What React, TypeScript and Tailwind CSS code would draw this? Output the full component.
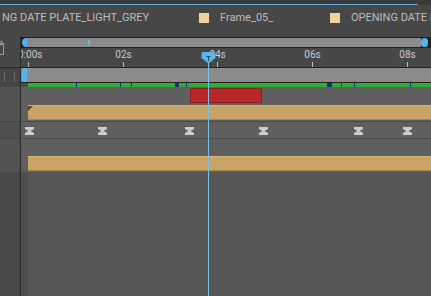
import React from "react";

const TICKS = [
  { x: 7, label: "0:00s" },
  { x: 102, label: "02s" },
  { x: 196, label: "04s" },
  { x: 291, label: "06s" },
  { x: 386, label: "08s" },
];

const MARKS = [
  { x: 48, w: 1 },
  { x: 92, w: 1 },
  { x: 103, w: 1 },
  { x: 147, w: 4 },
  { x: 158, w: 1 },
  { x: 299, w: 5 },
  { x: 313, w: 1 },
  { x: 326, w: 1 },
  { x: 382, w: 1 },
];

const KEYS = [29, 102, 189, 263, 358, 407];

function KeyIcon({ x }: { x: number }) {
  return (
    <svg
      className="absolute top-[5px]"
      style={{ left: x - 21 - 4.5 }}
      width="9"
      height="8"
      viewBox="0 0 9 8"
    >
      <polygon points="0,0 9,0 9,2 5.5,4 9,6 9,8 0,8 0,6 3.5,4 0,2" fill="#cdcdcd" />
    </svg>
  );
}

function TanBar({ corner }: { corner?: boolean }) {
  return (
    <div className="relative ml-[7px] h-[15px] bg-[#c9a265] border-t border-t-[#d9b577] border-b border-b-[#a8864f]">
      {corner && (
        <svg className="absolute left-0 top-0" width="5" height="5" viewBox="0 0 5 5">
          <polygon points="0,0 5,0 0,5" fill="#5b4024" />
        </svg>
      )}
    </div>
  );
}

export default function App() {
  return (
    <div className="relative w-[431px] h-[296px] overflow-hidden bg-[#575757] flex flex-col font-['Roboto',sans-serif]">
      {/* top strip */}
      <div className="h-[4px] bg-[#3a3a3a]" />
      <div className="h-px bg-[#3a3a3a]">
        <div className="w-[418px] h-px bg-[#5eb0dc]" />
      </div>

      {/* header with layer labels */}
      <div className="h-[32px] bg-[#474747] flex items-start pt-[8px] text-[11px] leading-[10px] text-[#bdbdbd] whitespace-nowrap overflow-hidden">
        <div className="w-[197px] ml-[2px] h-[10px] flex items-center shrink-0">NG DATE PLATE_LIGHT_GREY</div>
        <div className="w-[10px] h-[10px] bg-[#f0d29c] shrink-0" />
        <div className="w-[110px] ml-[11px] h-[10px] flex items-center shrink-0">Frame_05_</div>
        <div className="w-[10px] h-[10px] bg-[#f0d29c] shrink-0" />
        <div className="ml-[11px] h-[10px] flex items-center shrink-0">OPENING DATE PLATE</div>
      </div>

      {/* body */}
      <div className="flex flex-1 min-h-0">
        {/* left column */}
        <div className="w-[20px] flex flex-col shrink-0">
          <div className="h-[30px] bg-[#474747] relative">
            <svg className="absolute left-[-4px] top-[4px]" width="9" height="14" viewBox="0 0 9 14">
              <rect x="0.5" y="2.5" width="7" height="11" fill="none" stroke="#9a9a9a" strokeWidth="1" />
              <rect x="2" y="0.5" width="4" height="3" fill="none" stroke="#9a9a9a" strokeWidth="1" />
            </svg>
          </div>
          <div className="h-px bg-[#2c2c2c]" />
          <div className="h-[19px] bg-[#454545] relative">
            <div className="absolute left-[4px] top-[4px] w-px h-[10px] bg-[#6b6b6b]" />
            <div className="absolute left-[14px] top-[4px] w-px h-[10px] bg-[#6b6b6b]" />
          </div>
          <div className="h-[17px] bg-[#535353]" />
          <div className="h-[17px] bg-[#535353]" />
          <div className="h-px bg-[#444444]" />
          <div className="h-[16px] bg-[#4f4f4f]" />
          <div className="h-px bg-[#444444]" />
          <div className="h-[16px] bg-[#535353]" />
          <div className="h-[17px] bg-[#535353]" />
          <div className="flex-1 bg-[#484848]" />
        </div>
        <div className="w-px bg-[#2a2a2a] shrink-0" />

        {/* right timeline area */}
        <div className="flex-1 flex flex-col min-w-0 overflow-hidden">
          {/* scroll bar */}
          <div className="h-[11px] bg-[#1f1f1f] py-px flex">
            <div className="w-[5px] ml-px h-[9px] rounded-l-full bg-[#52b6ee] shrink-0" />
            <div className="w-[394px] h-[9px] bg-[#8b8b8b] relative shrink-0">
              <div className="absolute left-[61px] top-[2px] w-[2px] h-[5px] bg-[#6fb6d8]" />
            </div>
            <div className="w-[7px] h-[9px] rounded-full bg-[#52b6ee] shrink-0" />
          </div>

          {/* ruler */}
          <div className="h-[19px] bg-[#474747] relative">
            {TICKS.map((t, i) => (
              <React.Fragment key={t.label}>
                <div
                  className={
                    "absolute top-[2px] text-[10px] leading-[10px] text-[#cacaca] whitespace-nowrap " +
                    (i === 0 ? "" : "-translate-x-1/2")
                  }
                  style={{ left: i === 0 ? -3 : t.x + 0.5 }}
                >
                  {t.label}
                </div>
                <div className="absolute top-[14px] w-px h-[5px] bg-[#bdbdbd]" style={{ left: t.x }} />
              </React.Fragment>
            ))}
          </div>
          <div className="h-px bg-[#1f1f1f]" />

          {/* work area bar */}
          <div className="h-[14px] flex bg-[#8b8b8b]">
            <div className="w-[5px] ml-px h-[14px] rounded-l-[3px] bg-[#52b6ee]" />
          </div>
          <div className="h-px bg-[#1f1f1f]" />
          <div className="h-[4px] bg-[#4a4a4a] pl-[7px]">
            <div className="h-[4px] bg-[#2fae35] relative">
              {MARKS.map((m) => (
                <div
                  key={m.x}
                  className="absolute top-0 h-[4px] bg-[#1a2d8e]"
                  style={{ left: m.x, width: m.w }}
                />
              ))}
            </div>
          </div>

          {/* track rows */}
          <div className="h-[17px] bg-[#5f5f5f] relative">
            <div className="absolute left-[169px] top-[1px] w-[72px] h-[15px] bg-[#b8282a] border border-[#8e1c1c]" />
          </div>
          <div className="h-[17px] bg-[#5f5f5f] pt-px">
            <TanBar corner />
          </div>
          <div className="h-px bg-[#4a4a4a]" />
          <div className="h-[16px] bg-[#5f5f5f] relative">
            {KEYS.map((k) => (
              <KeyIcon key={k} x={k} />
            ))}
          </div>
          <div className="h-px bg-[#4a4a4a]" />
          <div className="h-[16px] bg-[#5e5e5e]" />
          <div className="h-[17px] bg-[#5f5f5f] pt-px">
            <TanBar />
          </div>
          <div className="flex-1 flex">
            <div className="w-[7px] bg-[#4f4f4f]" />
            <div className="flex-1 bg-[#575757]" />
          </div>
        </div>
      </div>

      {/* playhead */}
      <div className="absolute left-[208px] top-[56px] bottom-0 w-px bg-[#74c2e8]" />
      <svg className="absolute left-[201px] top-[52px]" width="15" height="12" viewBox="0 0 15 12">
        <path d="M2,0 H13 Q14.5,0 14.5,1.5 V6 L7.5,11.5 L0.5,6 V1.5 Q0.5,0 2,0 Z" fill="#58b8ee" />
        <rect x="7" y="4" width="1" height="5" fill="#1e4a66" />
        <rect x="5.5" y="4" width="4" height="1" fill="#1e4a66" />
      </svg>
    </div>
  );
}
